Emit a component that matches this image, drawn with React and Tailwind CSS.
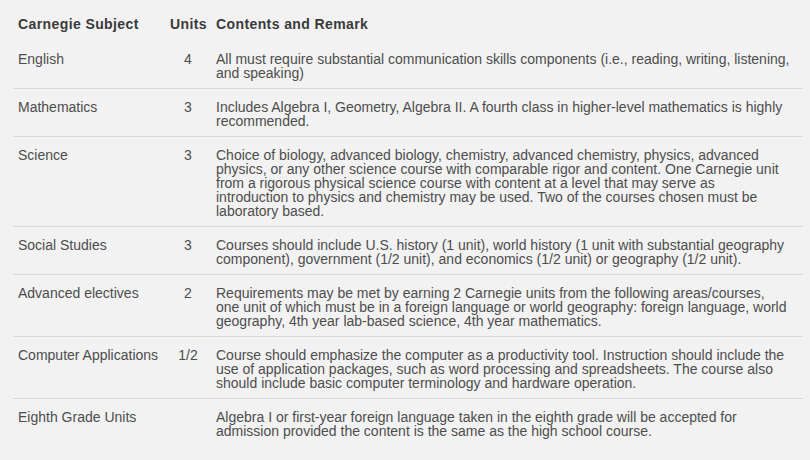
import React from 'react';

const rows = [
  {
    subject: 'English',
    units: '4',
    text: 'All must require substantial communication skills components (i.e., reading, writing, listening, and speaking)',
  },
  {
    subject: 'Mathematics',
    units: '3',
    text: 'Includes Algebra I, Geometry, Algebra II. A fourth class in higher-level mathematics is highly recommended.',
  },
  {
    subject: 'Science',
    units: '3',
    text: 'Choice of biology, advanced biology, chemistry, advanced chemistry, physics, advanced physics, or any other science course with comparable rigor and content. One Carnegie unit from a rigorous physical science course with content at a level that may serve as introduction to physics and chemistry may be used. Two of the courses chosen must be laboratory based.',
  },
  {
    subject: 'Social Studies',
    units: '3',
    text: 'Courses should include U.S. history (1 unit), world history (1 unit with substantial geography component), government (1/2 unit), and economics (1/2 unit) or geography (1/2 unit).',
  },
  {
    subject: 'Advanced electives',
    units: '2',
    text: 'Requirements may be met by earning 2 Carnegie units from the following areas/courses, one unit of which must be in a foreign language or world geography: foreign language, world geography, 4th year lab-based science, 4th year mathematics.',
  },
  {
    subject: 'Computer Applications',
    units: '1/2',
    text: 'Course should emphasize the computer as a productivity tool. Instruction should include the use of application packages, such as word processing and spreadsheets. The course also should include basic computer terminology and hardware operation.',
  },
  {
    subject: 'Eighth Grade Units',
    units: '',
    text: 'Algebra I or first-year foreign language taken in the eighth grade will be accepted for admission provided the content is the same as the high school course.',
  },
];

export default function App() {
  return (
    <div className="min-h-[460px] w-[810px] bg-[#f2f2f2] pl-[13px] pr-[7px] pt-[17px] font-['Liberation_Sans',Arial,sans-serif] text-[14px] leading-[14px] text-[#4d4d4d]">
      <table className="w-full table-fixed border-collapse">
        <colgroup>
          <col className="w-[152px]" />
          <col className="w-[46px]" />
          <col />
        </colgroup>
        <thead>
          <tr className="font-bold tracking-[0.4px] text-[#3a3a3a]">
            <th className="px-[5px] pb-[10px] text-left">Carnegie Subject</th>
            <th className="px-[5px] pb-[10px] text-center">Units</th>
            <th className="pl-[5px] pb-[10px] text-left">Contents and Remark</th>
          </tr>
        </thead>
        <tbody>
          {rows.map((r, i) => (
            <tr key={r.subject} className={i < rows.length - 1 ? 'border-b border-[#d9d9d9]' : ''}>
              <td className="whitespace-nowrap px-[5px] pb-[8px] pt-[11px] align-top">{r.subject}</td>
              <td className="px-[5px] pb-[8px] pt-[11px] text-center align-top">{r.units}</td>
              <td className="pb-[8px] pl-[5px] pr-[13px] pt-[11px] align-top">{r.text}</td>
            </tr>
          ))}
        </tbody>
      </table>
    </div>
  );
}
